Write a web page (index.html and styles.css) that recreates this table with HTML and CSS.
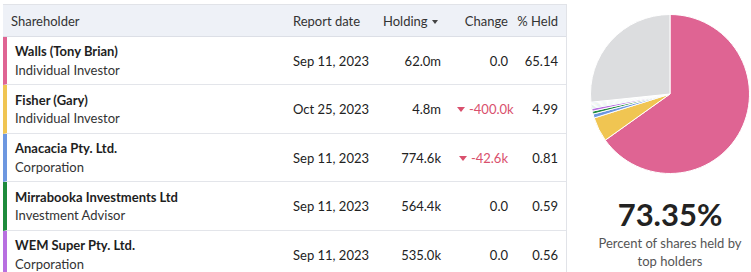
FILE: index.html
```html
<!DOCTYPE html>
<html lang="en">
<head>
    <meta charset="UTF-8">
    <title>Top Shareholders</title>
    <link rel="stylesheet" href="styles.css">
</head>
<body>
    <div class="holders">
        <table class="holders-table">
            <colgroup>
                <col class="w-name">
                <col class="w-date">
                <col class="w-holding">
                <col class="w-change">
                <col class="w-held">
            </colgroup>
            <thead>
                <tr>
                    <th>Shareholder</th>
                    <th>Report date</th>
                    <th class="col-num col-holding">Holding <span class="sort-caret"></span></th>
                    <th class="col-num col-change">Change</th>
                    <th class="col-num col-held">% Held</th>
                </tr>
            </thead>
            <tbody>
                <tr>
                    <td class="col-name bar-pink">
                        <div class="holder-name">Walls (Tony Brian)</div>
                        <div class="holder-type">Individual Investor</div>
                    </td>
                    <td>Sep 11, 2023</td>
                    <td class="col-num">62.0m</td>
                    <td class="col-num col-change">0.0</td>
                    <td class="col-num col-held">65.14</td>
                </tr>
                <tr>
                    <td class="col-name bar-yellow">
                        <div class="holder-name">Fisher (Gary)</div>
                        <div class="holder-type">Individual Investor</div>
                    </td>
                    <td>Oct 25, 2023</td>
                    <td class="col-num">4.8m</td>
                    <td class="col-num col-change down"><span class="down-caret"></span>-400.0k</td>
                    <td class="col-num col-held">4.99</td>
                </tr>
                <tr>
                    <td class="col-name bar-blue">
                        <div class="holder-name">Anacacia Pty. Ltd.</div>
                        <div class="holder-type">Corporation</div>
                    </td>
                    <td>Sep 11, 2023</td>
                    <td class="col-num">774.6k</td>
                    <td class="col-num col-change down"><span class="down-caret"></span>-42.6k</td>
                    <td class="col-num col-held">0.81</td>
                </tr>
                <tr>
                    <td class="col-name bar-green">
                        <div class="holder-name">Mirrabooka Investments Ltd</div>
                        <div class="holder-type">Investment Advisor</div>
                    </td>
                    <td>Sep 11, 2023</td>
                    <td class="col-num">564.4k</td>
                    <td class="col-num col-change">0.0</td>
                    <td class="col-num col-held">0.59</td>
                </tr>
                <tr>
                    <td class="col-name bar-purple">
                        <div class="holder-name">WEM Super Pty. Ltd.</div>
                        <div class="holder-type">Corporation</div>
                    </td>
                    <td>Sep 11, 2023</td>
                    <td class="col-num">535.0k</td>
                    <td class="col-num col-change">0.0</td>
                    <td class="col-num col-held">0.56</td>
                </tr>
            </tbody>
        </table>

        <div class="summary">
            <svg class="pie" width="160" height="160" viewBox="0 0 160 160">
                <path fill="#df6493" d="M80 80 L80 0.5 A79.5 79.5 0 1 1 15.28 126.17 Z"/>
                <path fill="#f0c552" d="M80 80 L15.28 126.17 A79.5 79.5 0 0 1 4.19 103.95 Z"/>
                <path fill="#6d97e0" d="M80 80 L4.19 103.95 A79.5 79.5 0 0 1 3.08 100.06 Z"/>
                <path fill="#1d8a3c" d="M80 80 L3.08 100.06 A79.5 79.5 0 0 1 2.38 97.20 Z"/>
                <path fill="#b86fe0" d="M80 80 L2.38 97.20 A79.5 79.5 0 0 1 1.83 94.45 Z"/>
                <path fill="#7fcfd0" d="M80 80 L1.83 94.45 A79.5 79.5 0 0 1 1.60 93.22 Z"/>
                <path fill="#a6d99a" d="M80 80 L1.60 93.22 A79.5 79.5 0 0 1 1.41 91.97 Z"/>
                <path fill="#9dc3ec" d="M80 80 L1.41 91.97 A79.5 79.5 0 0 1 1.22 90.72 Z"/>
                <path fill="#c9e6a7" d="M80 80 L1.22 90.72 A79.5 79.5 0 0 1 1.07 89.48 Z"/>
                <path fill="#b9d9f0" d="M80 80 L1.07 89.48 A79.5 79.5 0 0 1 0.93 88.23 Z"/>
                <path fill="#dcdddf" d="M80 80 L0.93 88.23 A79.5 79.5 0 0 1 80 0.5 Z"/>
            </svg>
            <div class="summary-value">73.35%</div>
            <div class="summary-label">Percent of shares held by top holders</div>
        </div>
    </div>
</body>
</html>
```

FILE: styles.css
```css
body {
    margin: 0;
    font-family: 'Lato', 'Liberation Sans', sans-serif;
    color: #222;
    background: #fff;
}
.holders {
    display: flex;
    align-items: flex-start;
    padding: 4px 0 0 3px;
}
.holders-table {
    width: 564px;
    table-layout: fixed;
    border-collapse: separate;
    border-spacing: 0;
    border-top: 1px solid #e1e3e8;
    border-right: 1px solid #e1e3e8;
    font-size: 13px;
    flex-shrink: 0;
}
.w-name { width: 282px; }
.w-date { width: 90px; }
.w-holding { width: 74px; }
.w-change { width: 65px; }
.w-held { width: 52px; }
.holders-table th {
    background: #eef1f7;
    color: #333;
    font-weight: normal;
    height: 32px;
    padding: 0 8px;
    border-bottom: 1px solid #dcdfe6;
    text-align: left;
    white-space: nowrap;
    box-sizing: border-box;
}
.holders-table td {
    height: 48px;
    padding: 0 8px;
    border-bottom: 1px solid #e3e5ea;
    white-space: nowrap;
    box-sizing: border-box;
}
.holders-table tbody tr:nth-child(even) td {
    height: 49px;
}
.holders-table .col-num {
    text-align: right;
}
.holders-table .col-change {
    padding-right: 6px;
}
.holders-table .col-held {
    padding-left: 0;
}
.holders-table td.col-name {
    line-height: 18.5px;
}
.holders-table th.col-holding {
    padding-right: 12px;
}
.sort-caret {
    display: inline-block;
    width: 0;
    height: 0;
    border-left: 3.5px solid transparent;
    border-right: 3.5px solid transparent;
    border-top: 4px solid #444;
    vertical-align: middle;
    margin-left: 1px;
}
.holder-name {
    font-weight: bold;
    color: #1e1e1e;
}
.holder-type {
    color: #333;
}
.bar-pink { border-left: 4px solid #df6493; }
.bar-yellow { border-left: 4px solid #f0c552; }
.bar-blue { border-left: 4px solid #6d97e0; }
.bar-green { border-left: 4px solid #1d8a3c; }
.bar-purple { border-left: 4px solid #b86fe0; }
.down {
    color: #d9506d;
}
.down-caret {
    display: inline-block;
    width: 0;
    height: 0;
    border-left: 4px solid transparent;
    border-right: 4px solid transparent;
    border-top: 5px solid #d9506d;
    vertical-align: middle;
    margin-right: 4px;
    position: relative;
    top: -1px;
}
.summary {
    width: 162px;
    margin-left: 22px;
    padding-top: 10px;
    text-align: center;
}
.pie {
    display: block;
    margin: 0 auto;
}
.pie path {
    stroke: #fff;
    stroke-width: 1;
    stroke-linejoin: round;
}
.summary-value {
    margin-top: 22px;
    font-size: 31px;
    font-weight: bold;
    line-height: 36px;
    color: #222;
}
.summary-label {
    margin-top: 2px;
    font-size: 13px;
    line-height: 18px;
    color: #555;
    padding: 0 8px;
}
```
